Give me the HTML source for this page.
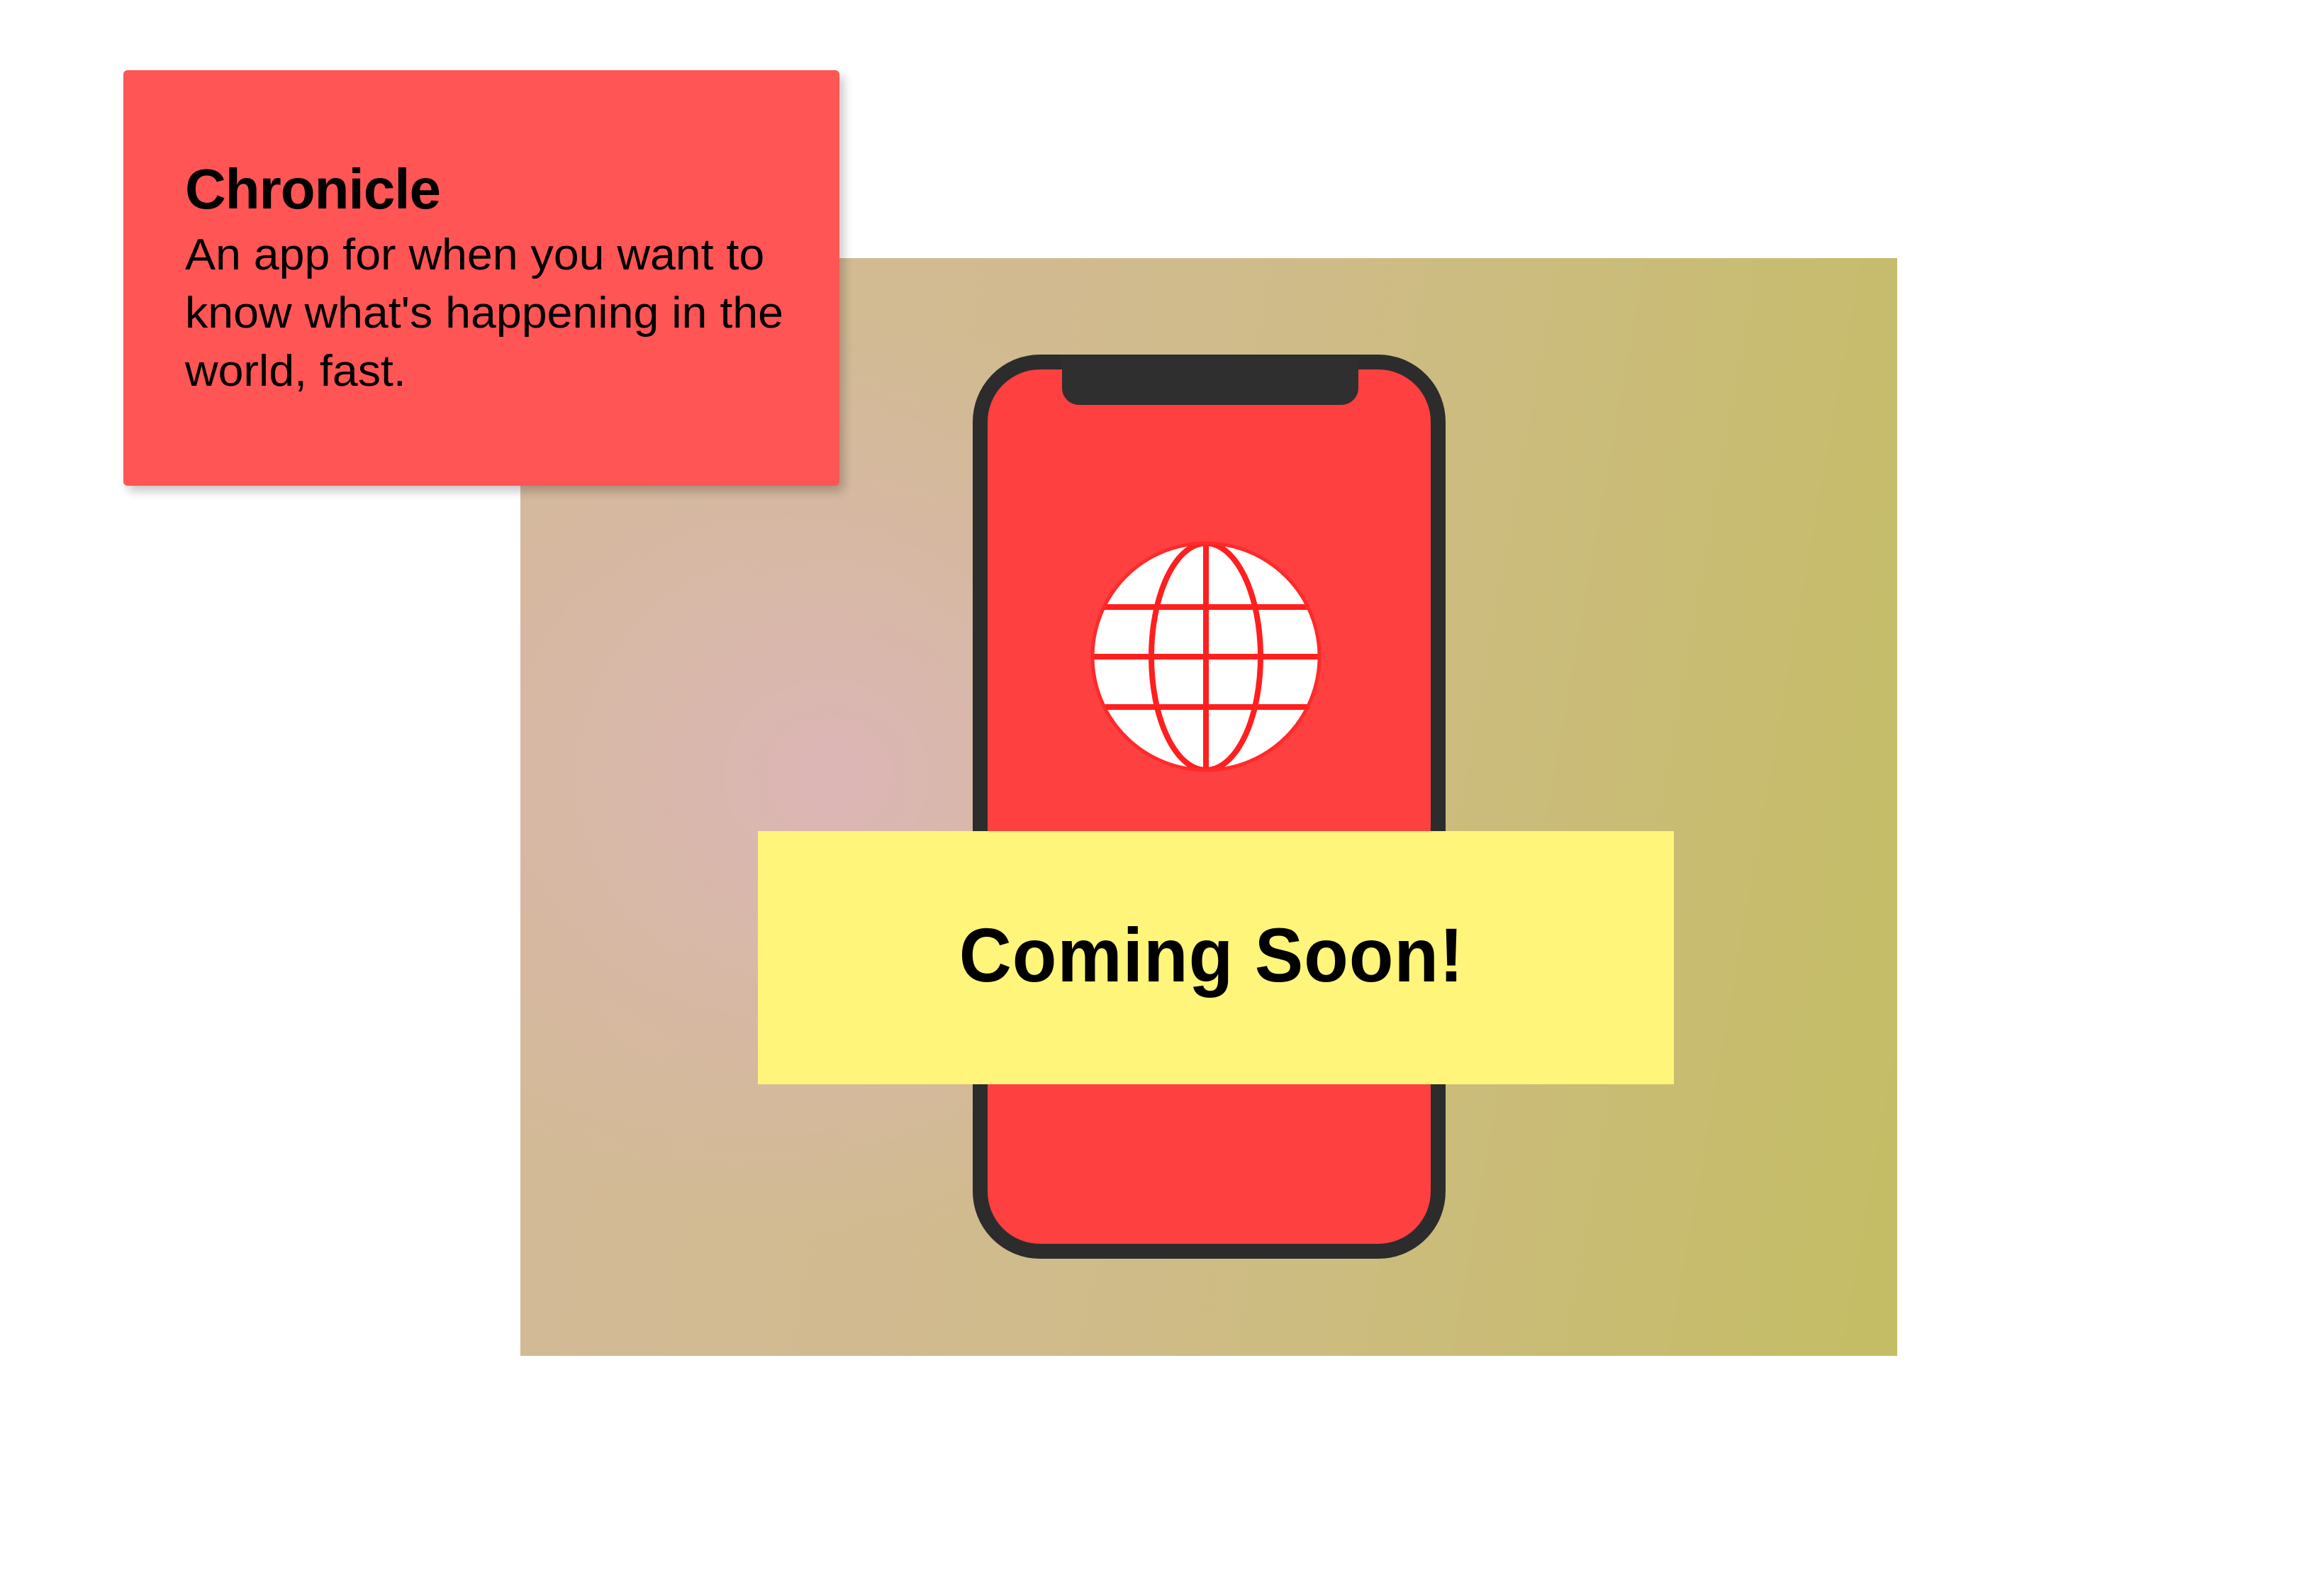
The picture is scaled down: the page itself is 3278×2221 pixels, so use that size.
<!DOCTYPE html>
<html><head><meta charset="utf-8"><style>
html,body{margin:0;padding:0;background:#fff;width:3278px;height:2221px;overflow:hidden;position:relative;font-family:"Liberation Sans",sans-serif}
.bg{position:absolute;left:734px;top:364px;width:1942px;height:1548px;
background:radial-gradient(ellipse 700px 650px at 440px 730px,rgba(220,182,182,1) 0%,rgba(220,182,182,0) 100%),linear-gradient(100deg,#d4b99a 0%,#d0bb8c 45%,#c4bd64 100%)}
.card{position:absolute;left:174px;top:99px;width:1010px;height:586px;background:#ff5555;border-radius:6px;box-shadow:6px 8px 14px rgba(0,0,0,.22)}
.card h1{position:absolute;left:87px;top:123px;margin:0;font-size:80px;font-weight:bold;line-height:90px;letter-spacing:-1px;transform-origin:left}
.card p{position:absolute;left:87px;top:220px;margin:0;font-size:62px;line-height:82px;width:1000px;transform:scaleX(1.04);transform-origin:left}
.phone{position:absolute;left:1372px;top:500px;width:625px;height:1233px;border:21px solid #2c2c2c;border-radius:95px;background:#ff4040}
.notch{position:absolute;left:1498px;top:504px;width:418px;height:67px;background:#2f2f2f;border-radius:0 0 24px 24px}
.yellow{position:absolute;left:1069px;top:1172px;width:1292px;height:357px;background:#fff57a;text-align:center;font-weight:bold;font-size:108px;line-height:350px;letter-spacing:1px}
.yellow span{display:inline-block;transform:scaleX(.95);position:relative;left:-6px}
</style></head><body>
<div class="bg"></div>
<div class="phone"></div>
<div class="notch"></div>
<svg style="position:absolute;left:1531px;top:755px" width="340" height="340" viewBox="1530 755 340 340">
<defs><clipPath id="c"><circle cx="1700" cy="926" r="158"/></clipPath></defs>
<circle cx="1700" cy="926" r="158" fill="#fff"/>
<g fill="none" stroke="#ff1f1f" stroke-width="8" clip-path="url(#c)">
<line x1="1530" y1="926" x2="1870" y2="926"/>
<line x1="1530" y1="856" x2="1870" y2="856"/>
<line x1="1530" y1="997" x2="1870" y2="997"/>
<line x1="1700" y1="760" x2="1700" y2="1090"/>
<ellipse cx="1700" cy="926" rx="77" ry="160"/>
</g>
<circle cx="1700" cy="926" r="160" fill="none" stroke="#ff2a2a" stroke-width="5"/>
</svg>
<div class="yellow"><span>Coming Soon!</span></div>
<div class="card"><h1>Chronicle</h1><p>An app for when you want to<br>know what's happening in the<br>world, fast.</p></div>
</body></html>
